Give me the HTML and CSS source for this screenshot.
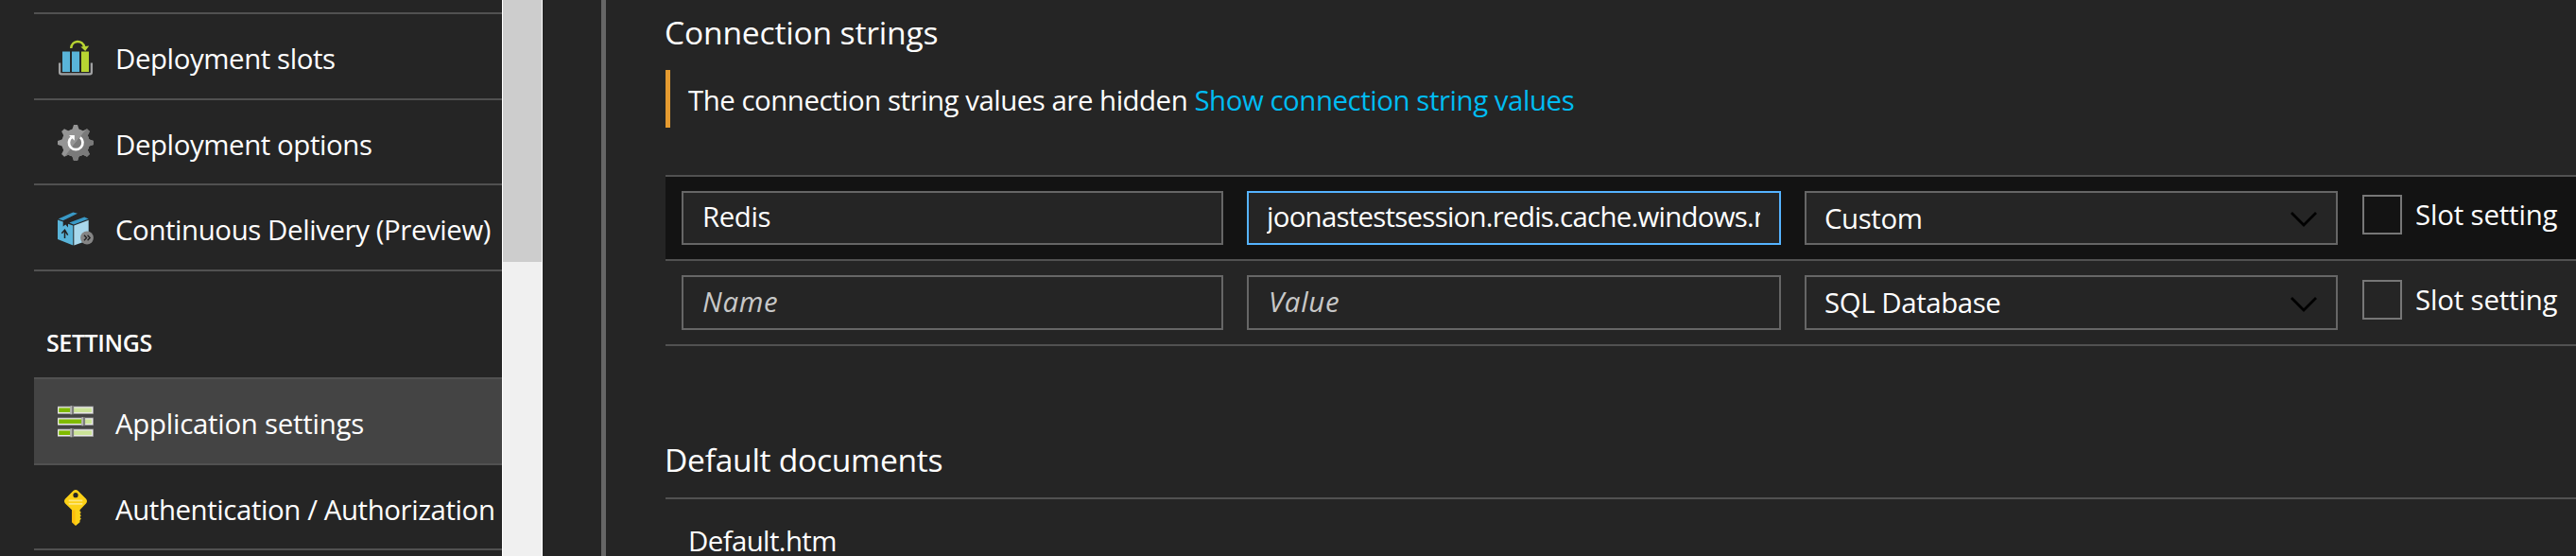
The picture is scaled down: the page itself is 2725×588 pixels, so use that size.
FILE: index.html
```html
<!DOCTYPE html>
<html lang="en">
<head>
    <meta charset="UTF-8">
    <meta name="viewport" content="width=device-width, initial-scale=1.0">
    <title>Application settings</title>
    <link rel="stylesheet" href="styles.css">
</head>
<body>
    <div class="portal">
        <nav class="sidebar">
            <ul class="menu">
                <li class="menu-item">
                    <svg class="icon" viewBox="0 0 38 38">
                        <path d="M5 12.5h8V34H5zM15 12.5h8V34h-8z" fill="#59b4d9"/>
                        <path d="M25 12.5h8V34h-8z" fill="#b8d432"/>
                        <path d="M2.1 24.5v10q0 1.8 1.8 1.8h30.2q1.8 0 1.8-1.8v-10" fill="none" stroke="#a0a1a2" stroke-width="2.3"/>
                        <path d="M14.2 9C14.8 -.2 26.5 -.4 28.3 8" fill="none" stroke="#b8d432" stroke-width="2.5"/>
                        <path d="M24.4 7.6l8.8-1.2-4 5.6z" fill="#b8d432"/>
                    </svg>
                    <span>Deployment slots</span>
                </li>
                <li class="menu-item short">
                    <svg class="icon" viewBox="0 0 38 38">
                        <defs>
                            <g id="gear">
                                <circle cx="19" cy="19" r="14.8"/>
                                <path id="teeth" d="M17 0h4l2 6v26l-2 6h-4l-2-6V6z"/>
                                <use href="#teeth" transform="rotate(45 19 19)"/>
                                <use href="#teeth" transform="rotate(90 19 19)"/>
                                <use href="#teeth" transform="rotate(135 19 19)"/>
                            </g>
                            <clipPath id="half"><path d="M34 0L4 38h34V0z"/></clipPath>
                        </defs>
                        <use href="#gear" fill="#959595"/>
                        <g clip-path="url(#half)"><use href="#gear" fill="#7a7a7a"/></g>
                        <path d="M14.6 13.2a7.3 7.3 0 1 0 9.2 0" fill="none" stroke="#fff" stroke-width="2.7"/>
                        <path d="M12 11h5.8v5.8z" fill="#fff"/>
                    </svg>
                    <span>Deployment options</span>
                </li>
                <li class="menu-item">
                    <svg class="icon" viewBox="0 0 38 38">
                        <path d="M0 9.5l5.7 2v5l2.6-2 2.7 3v-3.8l5.3 1.8v21L0 30z" fill="#59b4d9"/>
                        <path d="M17.3 15.5l15.4-5.7V31l-15.4 5.5z" fill="#a9d8ec"/>
                        <path d="M.7 8.5l15.6-7L21 2.8 5.7 10.2zM12.3 12.5l16-6 4.4 2L17 14.5z" fill="#3999c6"/>
                        <path d="M7.5 29v-8M4.3 23.7l3.2-3.4 3.2 5.4" fill="none" stroke="#222" stroke-width="1.5"/>
                        <circle cx="31" cy="28.5" r="6.9" fill="#858585"/>
                        <path d="M28 25.7l2.6 2.8-2.6 2.8M31.6 25.7l2.6 2.8-2.6 2.8" fill="none" stroke="#222" stroke-width="1.3"/>
                    </svg>
                    <span>Continuous Delivery (Preview)</span>
                </li>
            </ul>
            <h3 class="menu-title">SETTINGS</h3>
            <ul class="menu">
                <li class="menu-item active">
                    <svg class="icon" viewBox="0 0 38 38">
                        <defs>
                            <g id="track">
                                <path d="M0 0h38v8.6H0z" fill="#858585"/>
                                <path d="M0 .8h37.3v7H0z" fill="#e8e8e8"/>
                                <path d="M1.3 2H36v4.6H1.3z" fill="#cbe398"/>
                            </g>
                        </defs>
                        <use href="#track" y="2.5"/>
                        <use href="#track" y="14.5"/>
                        <use href="#track" y="26.5"/>
                        <path d="M1.3 4.5H13v4.6H1.3zM1.3 16.5H25v4.6H1.3zM1.3 28.5H13v4.6H1.3z" fill="#7fba00"/>
                        <path d="M13.5 2.2h3.6v9h-3.6zM25.5 14.2h3.6v9h-3.6zM13.5 26.2h3.6v9h-3.6z" fill="#7d7d7d"/>
                        <path d="M13.5 2.2h1.4v9h-1.4zM25.5 14.2h1.4v9h-1.4zM13.5 26.2h1.4v9h-1.4z" fill="#bbb"/>
                    </svg>
                    <span>Application settings</span>
                </li>
                <li class="menu-item short">
                    <svg class="icon" viewBox="0 0 38 38">
                        <path d="M16.5 1q2.5-2 5 0l8.5 8.5q2 2.5 0 5l-6.5 6.7v1.3l1.3 1.5-1.3 1.6 1.3 1.7-1.3 1.6 1.3 1.7-1.3 1.6v2L19 38l-4-3.8v-13l-7-6.7q-2-2.5 0-5z" fill="#fcd116"/>
                        <path d="M15 21.5h3.6V37L15 34.2z" fill="#ff9f00" opacity=".4"/>
                        <path d="M11.7 10.5h14.6v1.8H11.7zM11.7 14h14.6v1.8H11.7z" fill="#fde67c"/>
                        <circle cx="19" cy="5.7" r="2.6" fill="#252525"/>
                    </svg>
                    <span>Authentication / Authorization</span>
                </li>
            </ul>
        </nav>
        <div class="scrollbar"><div class="thumb"></div></div>

        <main class="content">
            <h2>Connection strings</h2>
            <p class="notice">The connection string values are hidden <a class="link">Show connection string values</a></p>

            <div class="grid">
                <div class="grid-row selected">
                    <input class="field name" type="text" value="Redis">
                    <input class="field value focused" type="text" value="joonastestsession.redis.cache.windows.net">
                    <div class="field dropdown">
                        <span>Custom</span>
                        <svg class="chevron" viewBox="0 0 28 16"><path d="M1 1l13 13L27 1"/></svg>
                    </div>
                    <label class="slot"><span class="checkbox"></span>Slot setting</label>
                </div>
                <div class="grid-row">
                    <input class="field name" type="text" placeholder="Name">
                    <input class="field value" type="text" placeholder="Value">
                    <div class="field dropdown">
                        <span>SQL Database</span>
                        <svg class="chevron" viewBox="0 0 28 16"><path d="M1 1l13 13L27 1"/></svg>
                    </div>
                    <label class="slot"><span class="checkbox"></span>Slot setting</label>
                </div>
            </div>

            <h2 class="documents-title">Default documents</h2>
            <div class="document">Default.htm</div>
        </main>
    </div>
</body>
</html>
```
FILE: styles.css
```css
* {
    box-sizing: border-box;
}

body {
    margin: 0;
    background-color: #252525;
    color: #fff;
    font-family: "Open Sans", "Noto Sans", sans-serif;
    font-size: 29.4px;
    line-height: 40px;
    letter-spacing: -0.35px;
}

.portal {
    display: flex;
    height: 588px;
    overflow: hidden;
}

/* sidebar */
.sidebar {
    width: 531px;
    flex-shrink: 0;
    padding: 13px 0 0 36px;
}

.menu {
    list-style: none;
    margin: 0;
    padding: 0;
    border-top: 2px solid #515151;
}

.menu-item {
    display: flex;
    align-items: center;
    gap: 23px;
    height: 91px;
    padding: 5px 0 0 25px;
    border-bottom: 2px solid #515151;
    letter-spacing: -0.4px;
    white-space: nowrap;
}

.menu-item.short {
    height: 90px;
}

.menu-item.active {
    background-color: #444;
    padding-top: 4px;
    letter-spacing: -0.25px;
}

.icon {
    width: 38px;
    height: 38px;
    margin-bottom: 3px;
    flex-shrink: 0;
}

.menu-title {
    height: 112px;
    margin: 0;
    padding: 55px 0 0 13px;
    font-size: 25px;
    font-weight: 600;
    letter-spacing: -0.4px;
}

.scrollbar {
    width: 43px;
    flex-shrink: 0;
    background-color: #f0f0f0;
    border: solid #fff;
    border-width: 0 1px;
}

.thumb {
    height: 277px;
    background-color: #cdcdcd;
}

/* main blade */
.content {
    flex: 1;
    min-width: 0;
    margin-left: 62px;
    padding: 14px 0 0 63px;
    border-left: 5px solid #666;
}

h2 {
    margin: 0 0 0 -1px;
    font-size: 33.6px;
    font-weight: 400;
    letter-spacing: -0.17px;
}

.notice {
    height: 61px;
    margin: 20px 0 50px;
    padding: 12px 0 0 19px;
    border-left: 5px solid #e59b30;
    letter-spacing: -0.47px;
}

.link {
    color: #00bcf2;
    letter-spacing: -0.43px;
}

.grid {
    border-top: 2px solid #515151;
}

.grid-row {
    display: grid;
    grid-template-columns: 573px 565px 564px 1fr;
    column-gap: 25px;
    align-items: center;
    height: 90px;
    padding-left: 17px;
    border-bottom: 2px solid #515151;
}

.grid-row.selected {
    height: 89px;
    background-color: #131313;
}

.field {
    width: 100%;
    height: 58px;
    border: 2px solid #666;
    background-color: #252525;
    color: #fff;
    font: inherit;
    letter-spacing: -0.4px;
    outline: none;
}

.selected .field {
    height: 57px;
}

.name {
    padding: 0 20px 3px 20px;
}

.value {
    padding: 0 20px 3px 21px;
}

.value.focused {
    padding-left: 19px;
    border-color: #55b3ff;
    letter-spacing: -0.73px;
}

.field::placeholder {
    color: #c8c8c8;
    font-style: italic;
    letter-spacing: 0.7px;
}

.dropdown {
    display: flex;
    align-items: center;
    justify-content: space-between;
    padding: 0 20px 0 19px;
}

.chevron {
    width: 28px;
    height: 16px;
    margin-top: 3px;
    fill: none;
    stroke: #000;
    stroke-width: 2.8;
}

.slot {
    display: flex;
    align-items: center;
    gap: 14px;
    margin: 0 0 7px 1px;
    letter-spacing: -0.15px;
    white-space: nowrap;
}

.checkbox {
    width: 42px;
    height: 42px;
    border: 2px solid #777;
}

.documents-title {
    margin: 100px 0 20px -1px;
    letter-spacing: -0.27px;
}

.document {
    padding: 29px 0 0 24px;
    border-top: 2px solid #515151;
    line-height: 31px;
    letter-spacing: -0.6px;
}
```
